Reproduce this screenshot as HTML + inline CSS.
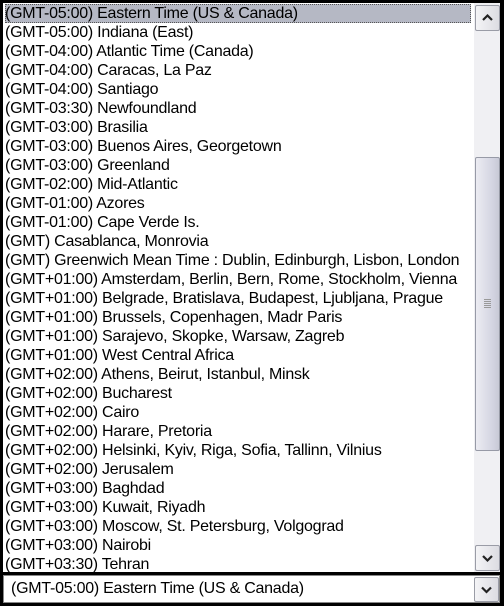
<html><head><style>
body{margin:0;width:504px;height:606px;background:#000;position:relative;overflow:hidden;font-family:"Liberation Sans",sans-serif;}
#list{position:absolute;left:3px;top:3px;width:497px;height:569px;background:#fff;overflow:hidden;}
.r{position:absolute;left:2px;height:19px;line-height:19px;font-size:16px;color:#000;white-space:nowrap;letter-spacing:-0.25px}
.sel{background:#b5b8c4;width:466px;outline:1px dotted #555;outline-offset:-1px}
#sb{position:absolute;left:471px;top:0;width:26px;height:569px;background:#f0f0f3;}
.btn{position:absolute;left:1px;width:23px;height:24px;border:1px solid #9a9ca6;border-radius:2px;background:linear-gradient(90deg,#f4f4f6,#dcdce2);}
#thumb{position:absolute;left:1px;top:154px;width:23px;height:292px;border:1px solid #979aa6;border-radius:2px;background:linear-gradient(90deg,#ececf2,#d4d5e2 70%,#c8c9d6);}
#combo{position:absolute;left:3px;top:575px;width:497px;height:28px;background:#fff;border:1px solid #888;box-sizing:border-box}
</style></head><body>
<div id="list">
<div class="r sel" style="top:1px">(GMT-05:00) Eastern Time (US &amp; Canada)</div>
<div class="r" style="top:20px">(GMT-05:00) Indiana (East)</div>
<div class="r" style="top:39px">(GMT-04:00) Atlantic Time (Canada)</div>
<div class="r" style="top:58px">(GMT-04:00) Caracas, La Paz</div>
<div class="r" style="top:77px">(GMT-04:00) Santiago</div>
<div class="r" style="top:96px">(GMT-03:30) Newfoundland</div>
<div class="r" style="top:115px">(GMT-03:00) Brasilia</div>
<div class="r" style="top:134px">(GMT-03:00) Buenos Aires, Georgetown</div>
<div class="r" style="top:153px">(GMT-03:00) Greenland</div>
<div class="r" style="top:172px">(GMT-02:00) Mid-Atlantic</div>
<div class="r" style="top:191px">(GMT-01:00) Azores</div>
<div class="r" style="top:210px">(GMT-01:00) Cape Verde Is.</div>
<div class="r" style="top:229px">(GMT) Casablanca, Monrovia</div>
<div class="r" style="top:248px">(GMT) Greenwich Mean Time : Dublin, Edinburgh, Lisbon, London</div>
<div class="r" style="top:267px">(GMT+01:00) Amsterdam, Berlin, Bern, Rome, Stockholm, Vienna</div>
<div class="r" style="top:286px">(GMT+01:00) Belgrade, Bratislava, Budapest, Ljubljana, Prague</div>
<div class="r" style="top:305px">(GMT+01:00) Brussels, Copenhagen, Madr Paris</div>
<div class="r" style="top:324px">(GMT+01:00) Sarajevo, Skopke, Warsaw, Zagreb</div>
<div class="r" style="top:343px">(GMT+01:00) West Central Africa</div>
<div class="r" style="top:362px">(GMT+02:00) Athens, Beirut, Istanbul, Minsk</div>
<div class="r" style="top:381px">(GMT+02:00) Bucharest</div>
<div class="r" style="top:400px">(GMT+02:00) Cairo</div>
<div class="r" style="top:419px">(GMT+02:00) Harare, Pretoria</div>
<div class="r" style="top:438px">(GMT+02:00) Helsinki, Kyiv, Riga, Sofia, Tallinn, Vilnius</div>
<div class="r" style="top:457px">(GMT+02:00) Jerusalem</div>
<div class="r" style="top:476px">(GMT+03:00) Baghdad</div>
<div class="r" style="top:495px">(GMT+03:00) Kuwait, Riyadh</div>
<div class="r" style="top:514px">(GMT+03:00) Moscow, St. Petersburg, Volgograd</div>
<div class="r" style="top:533px">(GMT+03:00) Nairobi</div>
<div class="r" style="top:552px">(GMT+03:30) Tehran</div>
<div id="sb">
<div class="btn" style="top:2px"><svg width="23" height="24"><path d="M7 14 L11.5 9.5 L16 14" stroke="#222" stroke-width="2.2" fill="none"/></svg></div>
<div id="thumb"><svg width="23" height="292"><g stroke="#999" stroke-width="1"><path d="M8 141.5h7M8 143.5h7M8 145.5h7M8 147.5h7M8 149.5h7"/></g></svg></div>
<div class="btn" style="top:542px"><svg width="23" height="24"><path d="M7 10 L11.5 14.5 L16 10" stroke="#222" stroke-width="2.2" fill="none"/></svg></div>
</div>
</div>
<div id="combo">
<div class="r" style="left:7px;top:3px">(GMT-05:00) Eastern Time (US &amp; Canada)</div>
<div class="btn" style="left:470px;top:1px;height:23px"><svg width="23" height="23"><path d="M7 9.5 L11.5 14 L16 9.5" stroke="#222" stroke-width="2.2" fill="none"/></svg></div>
</div>
</body></html>
